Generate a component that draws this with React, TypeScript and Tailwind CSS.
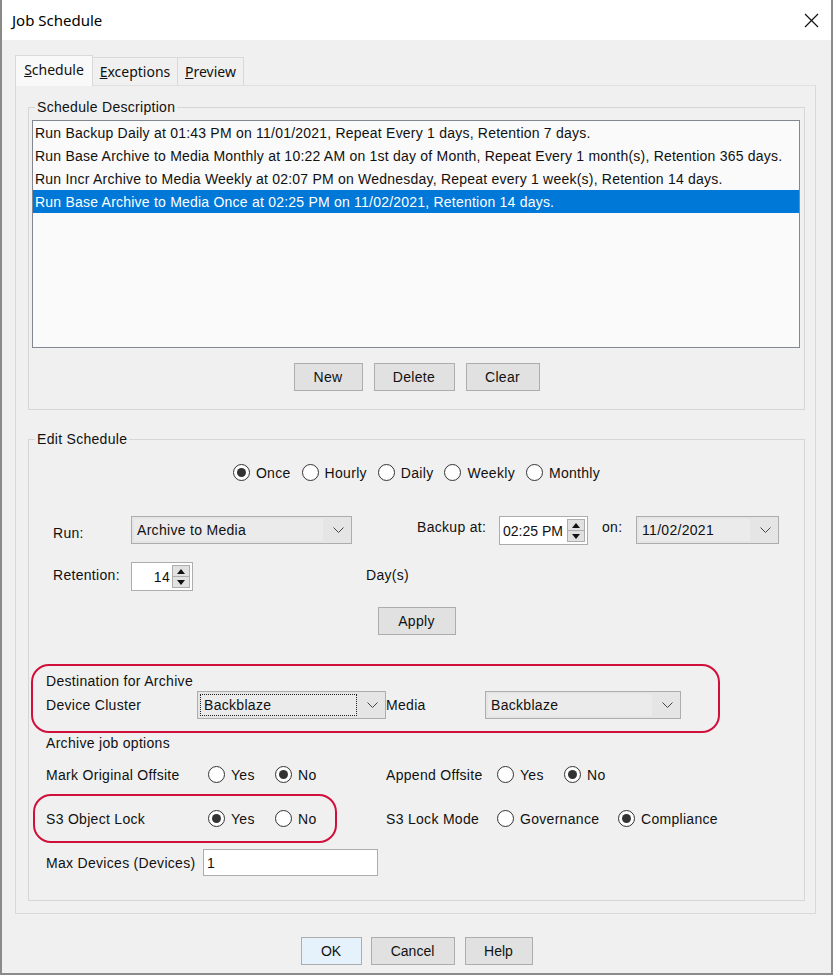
import React from "react";

const rows = [
  "Run Backup Daily at 01:43 PM on 11/01/2021, Repeat Every 1 days, Retention 7 days.",
  "Run Base Archive to Media Monthly at 10:22 AM on 1st day of Month, Repeat Every 1 month(s), Retention 365 days.",
  "Run Incr Archive to Media Weekly at 02:07 PM on Wednesday, Repeat every 1 week(s), Retention 14 days.",
  "Run Base Archive to Media Once at 02:25 PM on 11/02/2021, Retention 14 days.",
];

const Chevron = () => (
  <svg width="11" height="7" viewBox="0 0 11 7" fill="none">
    <path d="M0.5 0.5 L5.5 5.5 L10.5 0.5" stroke="#444" strokeWidth="1" />
  </svg>
);

const Radio = ({ checked, label, className = "" }: { checked?: boolean; label: string; className?: string }) => (
  <span className={"flex items-center gap-[6px] " + className}>
    <span className="w-[17px] h-[17px] shrink-0 rounded-full border border-[#333] bg-white flex items-center justify-center">
      {checked && <span className="w-[9px] h-[9px] rounded-full bg-[#333]" />}
    </span>
    <span>{label}</span>
  </span>
);

const Button = ({ label, className = "" }: { label: string; className?: string }) => (
  <div className={"h-[28px] flex items-center justify-center border border-[#adadad] bg-[#e1e1e1] " + className}>
    {label}
  </div>
);

const Combo = ({ value, className = "", focus }: { value: string; className?: string; focus?: boolean }) => (
  <div className={"h-[28px] flex items-stretch border border-[#adadad] bg-[#e5e5e5] " + className}>
    <div className="flex-1 flex items-center p-[2px]">
      <span className={"flex-1 h-full flex items-center pl-[3px] bg-[#ebebeb] " + (focus ? "border border-dotted border-[#222]" : "")}>
        {value}
      </span>
    </div>
    <div className="w-[26px] flex items-center justify-center">
      <Chevron />
    </div>
  </div>
);

const SpinButtons = () => (
  <div className="flex flex-col w-[20px] py-[2px] pr-[2px]">
    <div className="flex-1 flex items-center justify-center border border-[#adadad] bg-[#e1e1e1]">
      <svg width="8" height="5" viewBox="0 0 8 5"><path d="M4 0 L8 5 L0 5 Z" fill="#111" /></svg>
    </div>
    <div className="flex-1 flex items-center justify-center border border-t-0 border-[#adadad] bg-[#e1e1e1]">
      <svg width="8" height="5" viewBox="0 0 8 5"><path d="M0 0 L8 0 L4 5 Z" fill="#111" /></svg>
    </div>
  </div>
);

export default function App() {
  return (
    <div className="w-[837px] h-[977px] bg-white text-[14px] leading-[16px] text-[#111]" style={{ fontFamily: '"Liberation Sans", Arial, sans-serif' }}>
      <div className="w-[833px] h-[975px] border-l-2 border-r-2 border-b-2 border-[#8a8a8a] flex flex-col">
        {/* title bar */}
        <div className="h-[40px] bg-white flex items-center justify-between pl-[10px] pr-[12px]">
          <span className="text-[15px] text-black" style={{ fontFamily: '"Noto Sans", "Open Sans", sans-serif' }}>Job Schedule</span>
          <svg width="15" height="15" viewBox="0 0 15 15">
            <path d="M1 1 L14 14 M14 1 L1 14" stroke="#111" strokeWidth="1.2" />
          </svg>
        </div>

        <div className="flex-1 bg-[#f0f0f0] pt-[15px] flex flex-col">
          {/* tabs */}
          <div className="flex items-end pl-[13px] h-[30px] text-[14px]" style={{ fontFamily: '"Noto Sans", "Open Sans", sans-serif' }}>
            <div className="relative z-10 h-[31px] w-[78px] -mb-px border border-b-0 border-[#d9d9d9] bg-[#f9f9f9] flex items-center justify-center pb-[2px]">
              <span><span className="underline">S</span>chedule</span>
            </div>
            <div className="h-[28px] w-[85px] border border-l-0 border-b-0 border-[#d9d9d9] bg-[#f0f0f0] flex items-center justify-center">
              <span><span className="underline">E</span>xceptions</span>
            </div>
            <div className="h-[28px] w-[66px] border border-l-0 border-b-0 border-[#d9d9d9] bg-[#f0f0f0] flex items-center justify-center">
              <span><span className="underline">P</span>review</span>
            </div>
          </div>

          {/* tab panel */}
          <div className="ml-[13px] w-[801px] h-[829px] border border-[#d9d9d9] bg-[#f0f0f0] border-t-[#e0e0e0] tracking-[0.3px]">
            <fieldset className="ml-[12px] mt-[13px] w-[777px] border border-[#d6d6d6] pb-[18px]">
              <legend className="ml-[6px] px-[2px]">Schedule Description</legend>
              <div className="mt-[5px] ml-[3px] w-[768px] h-[228px] border border-[#828790] bg-[#fafafa] tracking-[0.22px]">
                {rows.map((r, i) => (
                  <div key={i} className={"h-[23px] flex items-center pl-[2px] whitespace-nowrap " + (i === 3 ? "bg-[#0078d7] text-white" : "")}>
                    {r}
                  </div>
                ))}
              </div>
              <div className="mt-[15px] flex justify-center gap-[11px]">
                <Button label="New" className="w-[69px]" />
                <Button label="Delete" className="w-[81px]" />
                <Button label="Clear" className="w-[74px]" />
              </div>
            </fieldset>

            <fieldset className="ml-[12px] mt-[21px] w-[777px] border border-[#d6d6d6] pb-[24px]">
              <legend className="ml-[6px] px-[2px]">Edit Schedule</legend>

              <div className="mt-[17px] flex justify-center gap-[11px] h-[17px]">
                <Radio checked label="Once" />
                <Radio label="Hourly" />
                <Radio label="Daily" />
                <Radio label="Weekly" />
                <Radio label="Monthly" />
              </div>

              {/* run row */}
              <div className="mt-[35px] flex items-start pl-[24px] h-[29px]">
                <span className="w-[78px] mt-[9px]">Run:</span>
                <Combo value="Archive to Media" className="w-[221px] h-[27px]" />
                <span className="ml-[65px] w-[82px] mt-[3px]">Backup at:</span>
                <div className="w-[89px] h-[29px] flex border border-[#adadad] bg-white tracking-normal">
                  <span className="flex-1 flex items-center pl-[3px]">02:25 PM</span>
                  <SpinButtons />
                </div>
                <span className="ml-[14px] w-[34px] mt-[3px]">on:</span>
                <Combo value="11/02/2021" className="w-[143px] h-[27px]" />
              </div>

              {/* retention row */}
              <div className="mt-[17px] flex items-start pl-[24px] h-[29px]">
                <span className="w-[78px] mt-[5px]">Retention:</span>
                <div className="w-[62px] h-[29px] flex border border-[#adadad] bg-white">
                  <span className="flex-1 flex items-center justify-end pr-[2px]">14</span>
                  <SpinButtons />
                </div>
                <span className="ml-[173px] mt-[5px]">Day(s)</span>
              </div>

              <div className="mt-[16px] flex justify-center">
                <Button label="Apply" className="w-[78px] h-[27px]" />
              </div>

              {/* destination box */}
              <div className="mt-[29px] ml-[2px] w-[689px] h-[69px] border-2 border-[#d0103a] rounded-[18px] pl-[13px] pt-[7px]">
                <div>Destination for Archive</div>
                <div className="mt-[2px] flex items-center">
                  <span className="w-[151px]">Device Cluster</span>
                  <Combo value="Backblaze" focus className="w-[189px]" />
                  <span className="w-[99px]">Media</span>
                  <Combo value="Backblaze" className="w-[196px]" />
                </div>
              </div>

              <div className="mt-[2px] ml-[17px]">Archive job options</div>

              <div className="mt-[15px] flex items-center h-[17px]">
                <div className="ml-[17px] w-[340px] flex items-center">
                  <span className="w-[162px]">Mark Original Offsite</span>
                  <Radio label="Yes" className="w-[67px]" />
                  <Radio checked label="No" />
                </div>
                <span className="w-[111px]">Append Offsite</span>
                <Radio label="Yes" className="w-[67px]" />
                <Radio checked label="No" />
              </div>

              <div className="mt-[11px] flex items-center">
                <div className="ml-[4px] w-[304px] h-[49px] border-2 border-[#d0103a] rounded-[18px] pl-[11px] flex items-center">
                  <span className="w-[162px]">S3 Object Lock</span>
                  <Radio checked label="Yes" className="w-[67px]" />
                  <Radio label="No" />
                </div>
                <span className="ml-[49px] w-[111px]">S3 Lock Mode</span>
                <Radio label="Governance" className="w-[121px]" />
                <Radio checked label="Compliance" />
              </div>

              <div className="mt-[6px] flex items-center ml-[17px]">
                <span className="w-[157px]">Max Devices (Devices)</span>
                <div className="w-[175px] h-[27px] border border-[#adadad] bg-white flex items-center pl-[3px]">1</div>
              </div>
            </fieldset>
          </div>

          {/* dialog buttons */}
          <div className="mt-[23px] flex justify-center">
            <Button label="OK" className="w-[61px] border-[#0078d7] bg-[#e5f1fb]" />
            <Button label="Cancel" className="ml-[9px] w-[84px]" />
            <Button label="Help" className="ml-[10px] w-[68px]" />
          </div>
        </div>
      </div>
    </div>
  );
}
